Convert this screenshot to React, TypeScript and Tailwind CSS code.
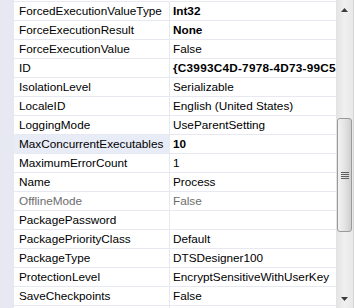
import React from "react";

type Row = { name: string; value: string; bold?: boolean; off?: boolean; sel?: boolean; wide?: boolean };

const rows: Row[] = [
  { name: "ForcedExecutionValueType", value: "Int32", bold: true },
  { name: "ForceExecutionResult", value: "None", bold: true },
  { name: "ForceExecutionValue", value: "False" },
  { name: "ID", value: "{C3993C4D-7978-4D73-99C5-4A2D3A3C5E7F}", bold: true, wide: true },
  { name: "IsolationLevel", value: "Serializable" },
  { name: "LocaleID", value: "English (United States)" },
  { name: "LoggingMode", value: "UseParentSetting" },
  { name: "MaxConcurrentExecutables", value: "10", bold: true, sel: true },
  { name: "MaximumErrorCount", value: "1" },
  { name: "Name", value: "Process" },
  { name: "OfflineMode", value: "False", off: true },
  { name: "PackagePassword", value: "" },
  { name: "PackagePriorityClass", value: "Default" },
  { name: "PackageType", value: "DTSDesigner100" },
  { name: "ProtectionLevel", value: "EncryptSensitiveWithUserKey" },
  { name: "SaveCheckpoints", value: "False" },
  { name: "", value: "" },
];

export default function App() {
  return (
    <div
      className="w-[354px] h-[308px] overflow-hidden bg-white flex text-[11.75px] text-black"
      style={{ fontFamily: '"Liberation Sans", Arial, sans-serif' }}
    >
      {/* grid */}
      <div className="flex-1 flex flex-col bg-[#e6e9f1] overflow-hidden">
        <div className="flex h-[2px] shrink-0">
          <div className="w-[14px] shrink-0" />
          <div className="flex-1 bg-white border-b border-[#e6e9f1]" />
        </div>
        {rows.map((r, i) => (
          <div key={i} className="flex h-[19px] shrink-0">
            <div className="w-[14px] shrink-0" />
            <div
              className={`w-[156px] shrink-0 border-b border-r border-[#e6e9f1] pl-[5px] leading-[18px] whitespace-nowrap overflow-hidden ${
                r.sel ? "bg-[#e8ecf6]" : "bg-white"
              } ${r.off ? "text-[#6d6d6d]" : ""}`}
            >
              {r.name}
            </div>
            <div
              className={`flex-1 bg-white border-b border-[#e6e9f1] pl-[3px] leading-[18px] whitespace-nowrap overflow-hidden ${
                r.bold ? "font-bold" : ""
              } ${r.off ? "text-[#6d6d6d]" : ""} ${r.wide ? "tracking-[0.25px]" : ""}`}
            >
              {r.value}
            </div>
          </div>
        ))}
      </div>

      {/* scrollbar */}
      <div className="w-[18px] shrink-0 bg-gradient-to-r from-[#e3e3e3] via-[#f0f0f0] to-[#e8e8e8] border-r border-[#d6d6d6] flex flex-col items-center">
        <div className="h-[19px] flex items-center justify-center">
          <svg width="7" height="4" viewBox="0 0 7 4">
            <path d="M0 4 L3.5 0 L7 4 Z" fill="#3c3c3c" />
          </svg>
        </div>
        <div className="h-[99px]" />
        <div className="w-[15px] h-[114px] rounded-[3px] border border-[#9a9a9a] bg-gradient-to-r from-[#f2f2f2] via-[#e4e4e4] to-[#cfcfcf] flex items-center justify-center">
          <div className="flex flex-col gap-[1px]">
            <div className="w-[8px] h-[1px] bg-[#5f5f5f]" />
            <div className="w-[8px] h-[1px] bg-[#5f5f5f]" />
            <div className="w-[8px] h-[1px] bg-[#5f5f5f]" />
            <div className="w-[8px] h-[1px] bg-[#5f5f5f]" />
          </div>
        </div>
        <div className="flex-1" />
        <div className="h-[19px] flex items-center justify-center">
          <svg width="7" height="4" viewBox="0 0 7 4">
            <path d="M0 0 L3.5 4 L7 0 Z" fill="#3c3c3c" />
          </svg>
        </div>
      </div>
    </div>
  );
}
